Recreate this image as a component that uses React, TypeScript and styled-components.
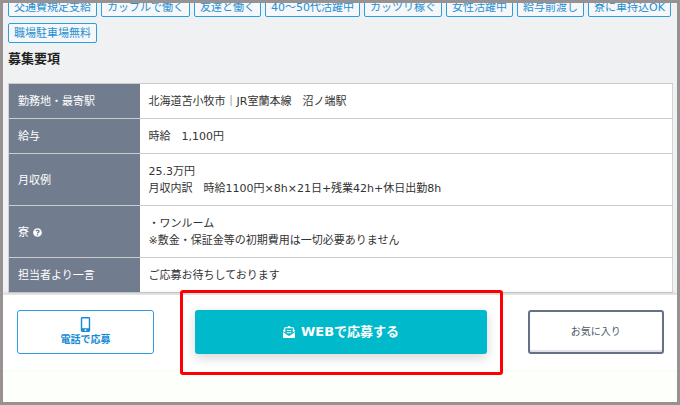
import React from "react";
import styled, { createGlobalStyle, css } from "styled-components";
import { FaEnvelopeOpenText, FaMobileAlt, FaQuestionCircle } from "react-icons/fa";

const GlobalStyle = createGlobalStyle`
  *, *::before, *::after { box-sizing: border-box; }
  body {
    margin: 0;
    color: #333;
    font-family: "DejaVu Sans", "Noto Sans CJK JP", sans-serif;
    font-size: 11px;
    line-height: 17px;
  }
`;

const Frame = styled.div`
  display: flex;
  flex-direction: column;
  min-height: 100vh;
  overflow: hidden;
  border: 3px solid #979192;
  background: #fdfffa;
`;

const Details = styled.main`
  padding: 0 4px 1px 5px;
  background: #f0f1f3;
`;

const TagList = styled.ul`
  display: flex;
  flex-wrap: wrap;
  gap: 6px 4px;
  margin: -6px 0 0;
  padding: 0;
  list-style: none;
`;

const Tag = styled.li`
  height: 20px;
  padding: 1px 5px 0;
  border: 1px solid #2a9fe0;
  border-radius: 2px;
  background: #f5f7f9;
  color: #268fd2;
  line-height: 18px;
  white-space: nowrap;
`;

const Heading = styled.h2`
  margin: 6px 0 14px;
  color: #222;
  font-size: 13px;
  font-weight: 700;
  line-height: 20px;
`;

const Table = styled.table`
  width: 100%;
  border-collapse: collapse;
  border: 1px solid #d3d3d3;
  background: #fff;
`;

const cell = css`
  padding: 9px 9px 8px;
  border-top: 1px solid #cbcccd;
  border-bottom: 1px solid #cbcccd;
  text-align: left;
`;

const LabelCell = styled.th`
  ${cell}
  width: 131px;
  background: #717d8e;
  color: #fff;
  font-weight: 400;
`;

const ValueCell = styled.td`
  ${cell}
`;

const HelpIcon = styled(FaQuestionCircle)`
  width: 9px;
  height: 9px;
  margin-left: 4px;
  vertical-align: -1px;
`;

const ActionBar = styled.footer`
  display: grid;
  grid-template-columns: 137fr 291fr 136fr;
  gap: 41px;
  padding: 15px 13px 16px 14px;
  border-top: 1px solid #e2e3e5;
  background: #fff;
  box-shadow: 0 -1px 3px rgba(0, 0, 0, 0.12);
`;

const Button = styled.button`
  display: flex;
  align-items: center;
  justify-content: center;
  width: 100%;
  height: 44px;
  padding: 0;
  border-radius: 3px;
  background: #fff;
  font-family: inherit;
  font-size: 10px;
  line-height: 14px;
  cursor: pointer;
`;

const PhoneButton = styled(Button)`
  flex-direction: column;
  gap: 1px;
  border: 1px solid #2a9fe0;
  color: #168bd6;
  font-weight: 700;
`;

const WebButton = styled(Button)`
  gap: 6px;
  border: 0;
  background: #00b9cb;
  box-shadow: 0 4px 12px rgba(0, 0, 0, 0.16);
  color: #fff;
  font-size: 13px;
  font-weight: 700;
`;

const FavoriteButton = styled(Button)`
  border: 2px solid #657286;
  box-shadow: inset 0 -2px 1px #dde2e9;
  color: #4d5866;
`;

const Highlighted = styled.div`
  position: relative;
`;

const HighlightBox = styled.div`
  position: absolute;
  inset: -20px -16px -21px -15px;
  border: 3px solid #f00;
  border-radius: 3px;
  pointer-events: none;
`;

const tags = [
  "交通費規定支給",
  "カップルで働く",
  "友達と働く",
  "40〜50代活躍中",
  "カッツリ稼ぐ",
  "女性活躍中",
  "給与前渡し",
  "寮に車持込OK",
  "職場駐車場無料",
];

const rows: { label: string; lines: string[]; help?: boolean }[] = [
  { label: "勤務地・最寄駅", lines: ["北海道苫小牧市｜JR室蘭本線　沼ノ端駅"] },
  { label: "給与", lines: ["時給　1,100円"] },
  { label: "月収例", lines: ["25.3万円", "月収内訳　時給1100円×8h×21日+残業42h+休日出勤8h"] },
  { label: "寮", lines: ["・ワンルーム", "※敷金・保証金等の初期費用は一切必要ありません"], help: true },
  { label: "担当者より一言", lines: ["ご応募お待ちしております"] },
];

export default function App() {
  return (
    <Frame lang="ja">
      <GlobalStyle />
      <Details>
        <TagList>
          {tags.map((tag) => (
            <Tag key={tag}>{tag}</Tag>
          ))}
        </TagList>
        <Heading>募集要項</Heading>
        <Table>
          <tbody>
            {rows.map((row) => (
              <tr key={row.label}>
                <LabelCell scope="row">
                  {row.label}
                  {row.help && <HelpIcon aria-hidden />}
                </LabelCell>
                <ValueCell>
                  {row.lines.map((line) => (
                    <div key={line}>{line}</div>
                  ))}
                </ValueCell>
              </tr>
            ))}
          </tbody>
        </Table>
      </Details>
      <ActionBar>
        <PhoneButton type="button">
          <FaMobileAlt size={15} aria-hidden />
          電話で応募
        </PhoneButton>
        <Highlighted>
          <WebButton type="button">
            <FaEnvelopeOpenText size={12} aria-hidden />
            WEBで応募する
          </WebButton>
          <HighlightBox />
        </Highlighted>
        <FavoriteButton type="button">お気に入り</FavoriteButton>
      </ActionBar>
    </Frame>
  );
}
